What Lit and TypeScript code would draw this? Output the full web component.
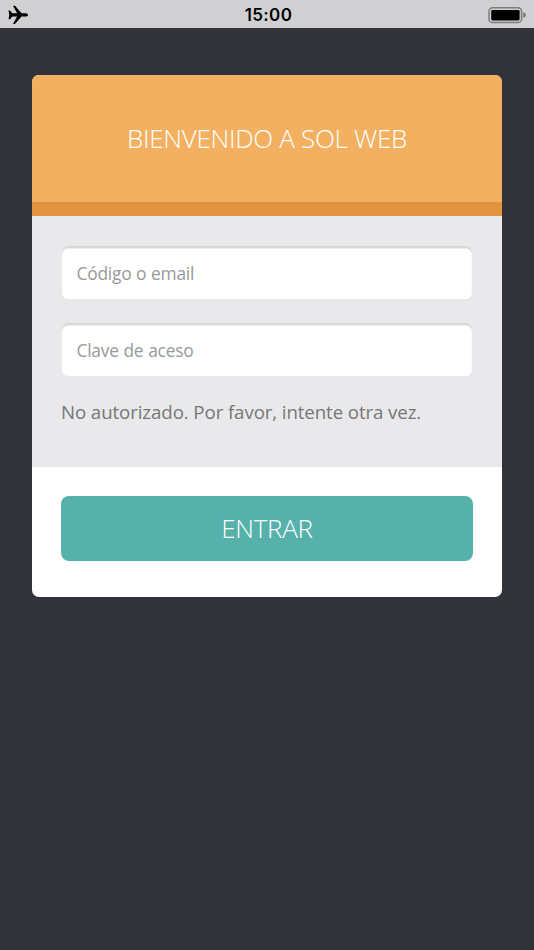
import { LitElement, html, css } from "lit";
import { customElement } from "lit/decorators.js";

@customElement("status-bar")
class StatusBar extends LitElement {
  static styles = css`
    :host {
      display: grid;
      grid-template-columns: 1fr auto 1fr;
      align-items: center;
      height: 28.4px;
      box-sizing: border-box;
      padding: 0 8px;
      background: #d0d0d2;
      color: #000;
    }
    .time {
      font: 600 17px/28px Inter, sans-serif;
      letter-spacing: 0.35px;
      padding: 1.2px 0 0 3px;
    }
    svg { display: block; }
    .battery { justify-self: end; margin-top: 1px; }
  `;

  render() {
    return html`
      <svg class="plane" width="20" height="20" viewBox="0 0 20 20">
        <path d="M.5 5.6h1.4l2.5 2.7h4.7L5 .8h2l6.6 7.5h4.1c1.5 0 2.3.8 2.3 1.6s-.8 1.6-2.3 1.6h-4.1L7 19H5l4.1-7.5H4.4l-2.5 2.7H.5l.8-4.3z"/>
      </svg>
      <span class="time">15:00</span>
      <svg class="battery" width="38" height="18" viewBox="0 0 38 18">
        <rect x="1" y="1.7" width="32.6" height="14.8" rx="3.6" fill="none" stroke="#7c7c7e" stroke-width="1.5"/>
        <rect x="3.2" y="3.9" width="28.4" height="10.6" rx="1.4"/>
        <path d="M35.4 6.3c1.5.5 2.3 1.5 2.3 2.8s-.8 2.3-2.3 2.8z" fill="#6c6c6e"/>
      </svg>
    `;
  }
}

@customElement("app-root")
class AppRoot extends LitElement {
  static styles = css`
    :host {
      display: block;
      min-height: 100vh;
      background: #323338;
      font-family: "Open Sans", sans-serif;
    }
    .card {
      margin: 47px 32px 0;
      border-radius: 7px;
      overflow: hidden;
      background: #fff;
    }
    .header {
      box-sizing: border-box;
      height: 141px;
      background: #f3b060;
      border-bottom: 14.3px solid #e0953e;
      text-align: center;
    }
    h1 {
      margin: 0;
      color: #fff;
      font-size: 26px;
      line-height: 127px;
      letter-spacing: -0.3px;
      font-weight: 300;
      white-space: nowrap;
    }
    .fields {
      box-sizing: border-box;
      height: 250.4px;
      padding: 30px 30px 0;
      background: #e9e9eb;
      display: flex;
      flex-direction: column;
    }
    input {
      box-sizing: border-box;
      width: 100%;
      height: 53px;
      margin: 0 0 24px;
      padding: 1px 14.5px 0;
      border: 0;
      outline: 0;
      border-radius: 6px;
      background: #fff;
      box-shadow: inset 0 2px 1px #d6d6d7, inset 0 3px 1px #f0f0f0;
      font: 400 17.4px/24px "Open Sans", sans-serif;
      letter-spacing: -0.25px;
      word-spacing: 0.5px;
      color: #777;
    }
    input::placeholder { color: #999; opacity: 1; }
    .message {
      margin: 0 0 0 -1px;
      font-size: 18.7px;
      line-height: 24px;
      letter-spacing: -0.1px;
      color: #777;
      white-space: nowrap;
    }
    .footer { padding: 29px 28.6px 35.7px; }
    button {
      display: block;
      width: 100%;
      height: 65.4px;
      padding: 0;
      border: 0;
      border-radius: 8px;
      background: #56b1aa;
      color: #fff;
      font: 300 26px/65px "Open Sans", sans-serif;
      letter-spacing: -0.3px;
    }
  `;

  render() {
    return html`
      <status-bar></status-bar>
      <form class="card" @submit=${(e: Event) => e.preventDefault()}>
        <div class="header"><h1>BIENVENIDO A SOL WEB</h1></div>
        <div class="fields">
          <input type="text" placeholder="Código o email">
          <input type="password" placeholder="Clave de aceso">
          <p class="message">No autorizado. Por favor, intente otra vez.</p>
        </div>
        <div class="footer"><button>ENTRAR</button></div>
      </form>
    `;
  }
}
